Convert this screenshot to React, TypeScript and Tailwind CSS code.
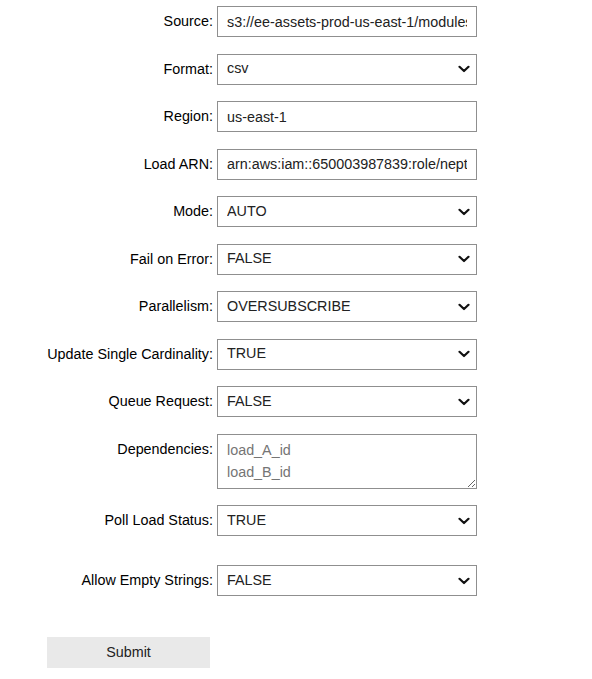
import React from "react";

const Chevron = () => (
  <svg
    className="pointer-events-none absolute right-[7px] top-1/2 -translate-y-1/2"
    width="12"
    height="8"
    viewBox="0 0 12 8"
    fill="none"
  >
    <path d="M1.5 1.8 L6 6 L10.5 1.8" stroke="#111" strokeWidth="2.2" strokeLinecap="round" strokeLinejoin="round" />
  </svg>
);

const Label = ({ children }: { children: React.ReactNode }) => (
  <label className="w-[213px] shrink-0 text-right leading-[30px] text-[14.35px] text-black">{children}</label>
);

const TextRow = ({ label, value }: { label: string; value: string }) => (
  <div className="flex items-start gap-[4px]">
    <Label>{label}</Label>
    <input
      readOnly
      defaultValue={value}
      className="h-[31px] w-[260px] border border-[#8f8f8f] bg-white px-[9px] text-[14.35px] text-[#222] outline-none"
    />
  </div>
);

const SelectRow = ({ label, value }: { label: string; value: string }) => (
  <div className="flex items-start gap-[4px]">
    <Label>{label}</Label>
    <div className="relative w-[260px]">
      <select
        defaultValue={value}
        className="h-[31px] w-full appearance-none border border-[#8f8f8f] bg-white pl-[9px] pr-[24px] text-[14.35px] text-[#222] outline-none"
      >
        <option>{value}</option>
      </select>
      <Chevron />
    </div>
  </div>
);

export default function App() {
  return (
    <div
      className="min-h-[679px] w-[592px] bg-white pt-[6px]"
      style={{ fontFamily: '"Liberation Sans", Arial, Helvetica, sans-serif' }}
    >
      <div className="flex flex-col gap-y-[16.5px]">
        <TextRow label="Source:" value="s3://ee-assets-prod-us-east-1/modules/neptune/data.csv" />
        <SelectRow label="Format:" value="csv" />
        <TextRow label="Region:" value="us-east-1" />
        <TextRow label="Load ARN:" value="arn:aws:iam::650003987839:role/neptune-load-role" />
        <SelectRow label="Mode:" value="AUTO" />
        <SelectRow label="Fail on Error:" value="FALSE" />
        <SelectRow label="Parallelism:" value="OVERSUBSCRIBE" />
        <SelectRow label="Update Single Cardinality:" value="TRUE" />
        <SelectRow label="Queue Request:" value="FALSE" />
        <div className="flex items-start gap-[4px]">
          <Label>Dependencies:</Label>
          <textarea
            placeholder={"load_A_id\nload_B_id"}
            className="h-[55px] w-[260px] border border-[#8f8f8f] bg-white px-[9px] pt-[4px] text-[14.35px] leading-[22px] text-[#222] outline-none placeholder:text-[#757575]"
          />
        </div>
        <SelectRow label="Poll Load Status:" value="TRUE" />
      </div>
      <div className="mt-[29px]">
        <SelectRow label="Allow Empty Strings:" value="FALSE" />
      </div>
      <div className="mt-[41px] pl-[47px]">
        <button className="h-[31px] w-[163px] bg-[#e9e9e9] text-[14.35px] text-[#222]">Submit</button>
      </div>
    </div>
  );
}
